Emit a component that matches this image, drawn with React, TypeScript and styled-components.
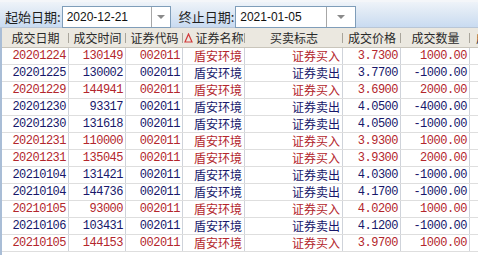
import React from "react";
import styled, { createGlobalStyle } from "styled-components";

const GlobalStyle = createGlobalStyle`
  html, body {
    margin: 0;
    padding: 0;
    background: #ffffff;
    overflow: hidden;
  }
  body {
    font-family: "Noto Sans CJK SC", "Liberation Sans", sans-serif;
  }
`;

const RED = "#b3262c";
const BLUE = "#17176a";

const COLS = "67px 57px 57px 62px 98px 58px 69px 60px";

const Window = styled.div`
  width: 478px;
  height: 255px;
  overflow: hidden;
  display: flex;
  flex-direction: column;
  background: #ffffff;
`;

const Toolbar = styled.div`
  height: 28px;
  box-sizing: border-box;
  padding: 4px 0 0 5px;
  display: flex;
  align-items: flex-start;
  background: linear-gradient(to bottom, #eef3f9 0%, #dde8f4 45%, #c9dbf1 100%);
  border-top: 2px solid #f4f6f9;
  border-bottom: 1px solid #b9c6d6;
`;

const Label = styled.span<{ $gap?: number }>`
  font-size: 13px;
  line-height: 22px;
  color: #1e1e1e;
  margin-left: ${(p) => p.$gap ?? 0}px;
  margin-right: 1px;
  white-space: nowrap;
`;

const DateBox = styled.div<{ $w: number }>`
  width: ${(p) => p.$w}px;
  height: 22px;
  box-sizing: border-box;
  display: flex;
  background: #ffffff;
  border: 1px solid #7f9db9;
`;

const DateText = styled.span`
  flex: 1;
  padding-left: 4px;
  font-family: "Liberation Sans", Arial, sans-serif;
  font-size: 12px;
  line-height: 20px;
  color: #111111;
`;

const DropButton = styled.span<{ $w: number }>`
  width: ${(p) => p.$w}px;
  display: flex;
  align-items: center;
  justify-content: center;
  border-left: 1px solid #a7a7a7;
  background: #ffffff;
`;

const Arrow = styled.span`
  width: 0;
  height: 0;
  border-left: 4px solid transparent;
  border-right: 4px solid transparent;
  border-top: 4px solid #8a8a8a;
`;

const Grid = styled.div`
  flex: 1;
  border-left: 2px solid #a9bdd6;
  display: flex;
  flex-direction: column;
`;

const HeadRow = styled.div`
  display: grid;
  grid-template-columns: ${COLS};
  height: 20px;
  box-sizing: border-box;
  background: #ebe8e0;
  border-bottom: 1px solid #c9c5bb;
`;

const HeadCell = styled.div`
  position: relative;
  display: flex;
  align-items: center;
  justify-content: center;
  font-size: 12px;
  line-height: 19px;
  color: #2a2a2a;
  white-space: nowrap;
  overflow: hidden;

  &::after {
    content: "";
    position: absolute;
    right: 0;
    top: 5px;
    bottom: 4px;
    width: 1px;
    background: #a9a59b;
    box-shadow: 1px 0 0 #ffffff;
  }
`;

const SortMark = styled.svg`
  margin-right: 2px;
  flex: none;
`;

const Row = styled.div`
  display: grid;
  grid-template-columns: ${COLS};
  height: 17px;
  box-sizing: border-box;
  border-bottom: 1px solid #dedede;
`;

const Cell = styled.div<{ $tone: "buy" | "sell"; $cjk?: boolean }>`
  box-sizing: border-box;
  padding-right: 2px;
  text-align: right;
  white-space: nowrap;
  overflow: hidden;
  border-right: 1px solid #cfd3da;
  color: ${(p) => (p.$tone === "buy" ? RED : BLUE)};
  font-family: ${(p) =>
    p.$cjk
      ? `"Noto Sans CJK SC", sans-serif`
      : `"Liberation Mono", "DejaVu Sans Mono", monospace`};
  font-size: 12px;
  letter-spacing: ${(p) => (p.$cjk ? "0" : "-0.5px")};
  line-height: 16px;
`;

type Trade = [string, string, string, string, string];

const trades: Trade[] = [
  ["20201224", "130149", "证券买入", "3.7300", "1000.00"],
  ["20201225", "130002", "证券卖出", "3.7700", "-1000.00"],
  ["20201229", "144941", "证券买入", "3.6900", "2000.00"],
  ["20201230", "93317", "证券卖出", "4.0500", "-4000.00"],
  ["20201230", "131618", "证券卖出", "4.0500", "-1000.00"],
  ["20201231", "110000", "证券买入", "3.9300", "1000.00"],
  ["20201231", "135045", "证券买入", "3.9300", "2000.00"],
  ["20210104", "131421", "证券卖出", "4.0300", "-1000.00"],
  ["20210104", "144736", "证券卖出", "4.1700", "-1000.00"],
  ["20210105", "93000", "证券买入", "4.0200", "1000.00"],
  ["20210106", "103431", "证券卖出", "4.1200", "-1000.00"],
  ["20210105", "144153", "证券买入", "3.9700", "1000.00"],
];

const headers = ["成交日期", "成交时间", "证券代码", "证券名称", "买卖标志", "成交价格", "成交数量", "成交金额"];

export default function App() {
  return (
    <Window>
      <GlobalStyle />
      <Toolbar>
        <Label>起始日期:</Label>
        <DateBox $w={109}>
          <DateText>2020-12-21</DateText>
          <DropButton $w={18}>
            <Arrow />
          </DropButton>
        </DateBox>
        <Label $gap={8}>终止日期:</Label>
        <DateBox $w={121}>
          <DateText>2021-01-05</DateText>
          <DropButton $w={28}>
            <Arrow />
          </DropButton>
        </DateBox>
      </Toolbar>
      <Grid>
        <HeadRow>
          {headers.map((h, i) => (
            <HeadCell key={h}>
              {i === 3 && (
                <SortMark width="9" height="10" viewBox="0 0 9 10">
                  <path d="M4.5 1 L8 9 L1 9 Z" fill="none" stroke="#d23a3a" strokeWidth="1.2" />
                </SortMark>
              )}
              {h}
            </HeadCell>
          ))}
        </HeadRow>
        {trades.map(([date, time, flag, price, qty], i) => {
          const tone = flag === "证券买入" ? "buy" : "sell";
          return (
            <Row key={i}>
              <Cell $tone={tone}>{date}</Cell>
              <Cell $tone={tone}>{time}</Cell>
              <Cell $tone={tone}>002011</Cell>
              <Cell $tone={tone} $cjk>盾安环境</Cell>
              <Cell $tone={tone} $cjk>{flag}</Cell>
              <Cell $tone={tone}>{price}</Cell>
              <Cell $tone={tone}>{qty}</Cell>
              <Cell $tone={tone}></Cell>
            </Row>
          );
        })}
      </Grid>
    </Window>
  );
}
